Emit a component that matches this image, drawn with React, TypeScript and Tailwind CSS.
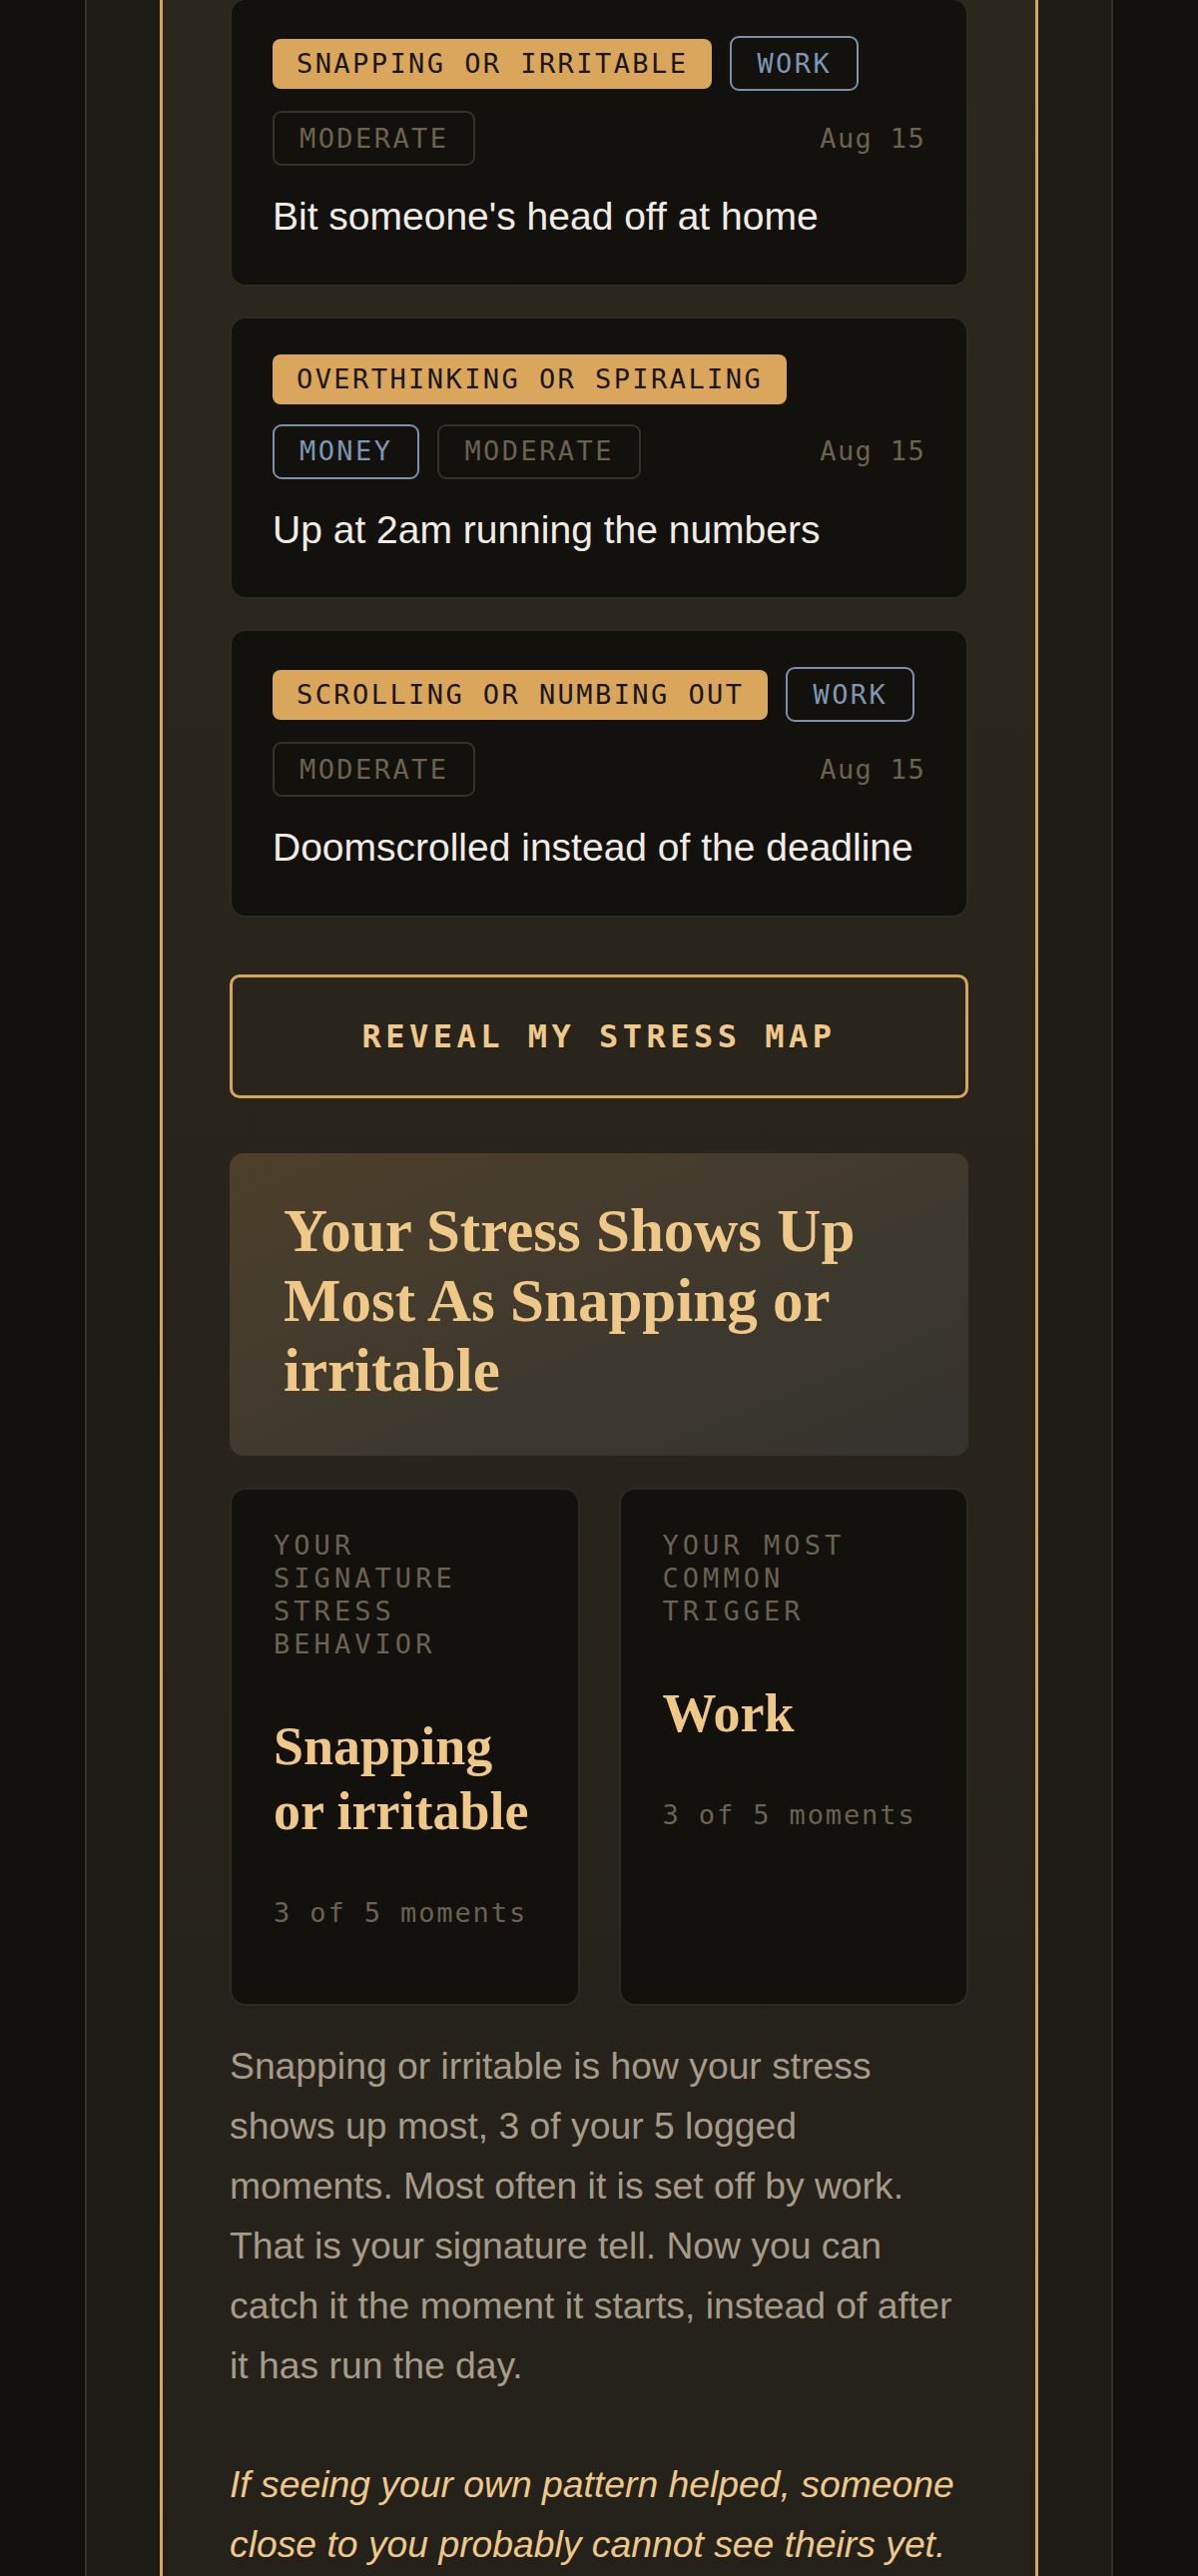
import React from 'react'

type Moment = {
  behavior: string
  trigger: string
  intensity: string
  date: string
  note: string
}

const MOMENTS: Moment[] = [
  { behavior: 'Snapping or irritable', trigger: 'Work', intensity: 'Moderate', date: 'Aug 15', note: "Bit someone's head off at home" },
  { behavior: 'Overthinking or spiraling', trigger: 'Money', intensity: 'Moderate', date: 'Aug 15', note: 'Up at 2am running the numbers' },
  { behavior: 'Scrolling or numbing out', trigger: 'Work', intensity: 'Moderate', date: 'Aug 15', note: 'Doomscrolled instead of the deadline' },
]

const mono = "font-['DejaVu_Sans_Mono',monospace]"
const serif = "font-['Liberation_Serif',serif]"

function MomentCard({ m }: { m: Moment }) {
  return (
    <div className="rounded-[16px] border-2 border-[#2d2a24] bg-[#12110e] px-[41px] pt-[36px] pb-[37.5px]">
      <div className={`flex flex-wrap items-center gap-x-[18px] gap-y-[20px] ${mono} text-[27px] leading-[32px] uppercase`}>
        <span className="rounded-[8px] bg-[#d9a65b] px-[24px] py-[9px] tracking-[0.09em] text-[#1a1710]">
          {m.behavior}
        </span>
        <span className="rounded-[9px] border-2 border-[#7b91a8] px-[25px] py-[9.5px] tracking-[0.09em] text-[#7f97b0]">
          {m.trigger}
        </span>
        <span className="rounded-[9px] border-2 border-[#35302a] px-[25px] py-[9.5px] tracking-[0.09em] text-[#6b6252]">
          {m.intensity}
        </span>
        <span className="ml-auto normal-case tracking-[0.05em] text-[#6b6252]">{m.date}</span>
      </div>
      <p className="mt-[20px] font-['Liberation_Sans',sans-serif] text-[39px] leading-[61px] text-[#f2ede4]">
        {m.note}
      </p>
    </div>
  )
}

function StatCard({ label, value, count }: { label: string; value: string; count: string }) {
  return (
    <div className="rounded-[16px] border-2 border-[#2d2a24] bg-[#12110e] px-[42px] pt-[39px] pb-[75px]">
      <p className={`${mono} text-[27px] leading-[33px] uppercase tracking-[0.15em] text-[#6b6252]`}>{label}</p>
      <p className={`mt-[54px] ${serif} text-[54px] leading-[65px] font-bold text-[#efc888]`}>{value}</p>
      <p className={`mt-[52px] ${mono} text-[27px] leading-[33px] tracking-[0.07em] text-[#6b6252]`}>{count}</p>
    </div>
  )
}

export default function App() {
  return (
    <div className="flex min-h-[2580px] justify-center overflow-hidden bg-[#12110e]">
      <div className="flex w-[1030px] border-x-2 border-[#33302a] bg-[#1c1b16] px-[73px]">
        <div className="w-full border-x-[3px] border-[#d8a65b] bg-linear-to-b from-[#2b271d] to-[#24211b] px-[67px] pb-[200px]">
          {/* Logged moments */}
          <div className="-mt-[2px] flex flex-col gap-[30px]">
            {MOMENTS.map((m, i) => (
              <MomentCard key={i} m={m} />
            ))}
          </div>

          <button
            type="button"
            className={`mt-[57px] flex h-[124px] w-full items-center justify-center rounded-[10px] border-[3px] border-[#d8a65b] ${mono} text-[32px] font-bold tracking-[0.14em] text-[#efc88a]`}
          >
            REVEAL MY STRESS MAP
          </button>

          {/* Result */}
          <div className="mt-[55px] rounded-[14px] bg-linear-to-br from-[#4e402a] via-[#403a2e] to-[#34332e] px-[54px] pt-[43px] pb-[50px]">
            <h2 className={`${serif} text-[61px] leading-[70px] font-bold text-[#efc888]`}>
              Your Stress Shows Up Most As Snapping or irritable
            </h2>
          </div>

          <div className="mt-[32px] grid grid-cols-2 gap-[39px]">
            <StatCard label="Your signature stress behavior" value="Snapping or irritable" count="3 of 5 moments" />
            <StatCard label="Your most common trigger" value="Work" count="3 of 5 moments" />
          </div>

          <div className="mt-[30px] font-['Liberation_Sans',sans-serif] text-[37.3px] leading-[60px]">
            <p className="text-[#a59b87]">
              Snapping or irritable is how your stress shows up most, 3 of your 5 logged moments. Most often it is set off by work. That is your signature tell. Now you can catch it the moment it starts, instead of after it has run the day.
            </p>
            <p className="mt-[59px] italic text-[#efc888]">
              If seeing your own pattern helped, someone close to you probably cannot see theirs yet.
            </p>
          </div>
        </div>
      </div>
    </div>
  )
}
